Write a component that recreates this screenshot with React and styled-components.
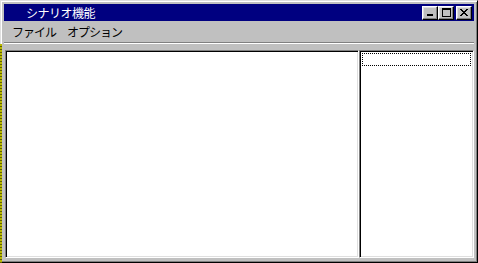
import styled, { createGlobalStyle } from "styled-components"

const Global = createGlobalStyle`
  html, body {
    margin: 0;
    padding: 0;
    background: #c0c0c0;
  }
  body {
    font-family: "Noto Sans CJK JP", "Liberation Sans", sans-serif;
  }
`

const Window = styled.div`
  position: relative;
  box-sizing: border-box;
  width: 478px;
  height: 263px;
  background: #c0c0c0;
  border: 1px solid;
  border-color: #dfdfdf #000 #000 #dfdfdf;
  box-shadow: inset 1px 1px #fff, inset -1px -1px #808080;
  padding: 3px;
  display: flex;
  flex-direction: column;
  &::before {
    content: "";
    position: absolute;
    left: -1px;
    top: 43px;
    bottom: -1px;
    width: 2px;
    background: repeating-linear-gradient(to bottom, #b8b800 0 2px, #606000 2px 3px);
  }
`

const TitleBar = styled.div`
  height: 17px;
  background: #000080;
  display: flex;
  align-items: center;
  padding: 0 2px 0 22px;
`

const Title = styled.span`
  flex: 1;
  color: #fff;
  font-size: 12px;
  letter-spacing: -0.5px;
  line-height: 17px;
`

const CaptionButton = styled.button`
  box-sizing: border-box;
  width: 16px;
  height: 14px;
  margin-left: ${p => (p.$gap ? "2px" : "0")};
  padding: 0;
  background: #c0c0c0;
  border: 1px solid;
  border-color: #fff #000 #000 #fff;
  box-shadow: inset -1px -1px #808080, inset 1px 1px #dfdfdf;
  display: flex;
  align-items: center;
  justify-content: center;
  svg {
    display: block;
  }
`

const MenuBar = styled.div`
  height: 20px;
  display: flex;
  align-items: center;
  padding: 0 4px;
`

const MenuItem = styled.span`
  padding: 0 ${p => p.$pad || 4}px;
  font-size: 12px;
  letter-spacing: -1px;
  color: #000;
`

const Separator = styled.div`
  height: 0;
  margin-top: 1px;
  border-top: 1px solid #808080;
  border-bottom: 1px solid #fff;
`

const Client = styled.div`
  flex: 1;
  display: flex;
  padding: 6px 0 1px 1px;
  min-height: 0;
`

const Field = styled.div`
  box-sizing: border-box;
  background: #fff;
  border: 1px solid;
  border-color: #808080 #fff #fff #808080;
  box-shadow: inset 1px 1px #000, inset -1px -1px #dfdfdf;
  padding: 2px;
  ${p => (p.$width ? `width: ${p.$width}px;` : "flex: 1;")}
`

const FocusRow = styled.div`
  height: 11px;
  border: 1px dotted #000;
`

function MinIcon() {
  return (
    <svg width="8" height="7" viewBox="0 0 8 7">
      <rect x="1" y="5" width="6" height="2" fill="#000" />
    </svg>
  )
}

function MaxIcon() {
  return (
    <svg width="9" height="9" viewBox="0 0 9 9">
      <path d="M0 0h9v9H0z M1 2v6h7V2z" fill="#000" fillRule="evenodd" />
    </svg>
  )
}

function CloseIcon() {
  return (
    <svg width="8" height="7" viewBox="0 0 8 7" shapeRendering="crispEdges">
      <path
        d="M0 0h2v1h1v1h2V1h1V0h2v1H7v1H6v1H5v1h1v1h1v1h1v1H6V6H5V5H3v1H2v1H0V6h1V5h1V4h1V3H2V2H1V1H0z"
        fill="#000"
      />
    </svg>
  )
}

export default function App() {
  return (
    <>
      <Global />
      <Window>
        <TitleBar>
          <Title>シナリオ機能</Title>
          <CaptionButton><MinIcon /></CaptionButton>
          <CaptionButton><MaxIcon /></CaptionButton>
          <CaptionButton $gap><CloseIcon /></CaptionButton>
        </TitleBar>
        <MenuBar>
          <MenuItem>ファイル</MenuItem>
          <MenuItem $pad={7}>オプション</MenuItem>
        </MenuBar>
        <Separator />
        <Client>
          <Field />
          <Field $width={115}>
            <FocusRow />
          </Field>
        </Client>
      </Window>
    </>
  )
}
